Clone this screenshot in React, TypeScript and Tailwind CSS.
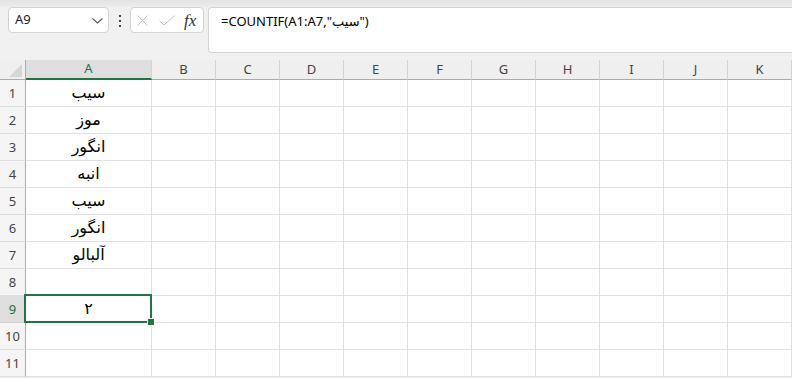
import React from "react";

const cols = ["B", "C", "D", "E", "F", "G", "H", "I", "J", "K"];
const data: Record<number, string> = {
  1: "سیب",
  2: "موز",
  3: "انگور",
  4: "انبه",
  5: "سیب",
  6: "انگور",
  7: "آلبالو",
  9: "۲",
};

const ui = { fontFamily: '"Noto Sans", "Open Sans", sans-serif' };
const fa = { fontFamily: '"DejaVu Sans", "Noto Sans", sans-serif' };

export default function App() {
  const rows = Array.from({ length: 11 }, (_, i) => i + 1);
  return (
    <div className="w-[792px] h-[378px] overflow-hidden bg-[#f0f0f0]" style={ui}>
      <div className="h-[7px] bg-gradient-to-b from-[#e3e3e3] to-[#ececec]" />
      <div className="flex h-[46px] pl-[8px]">
        <div className="flex h-[26px] w-[101px] items-center justify-between rounded-[4px] border border-[#d4d4d4] bg-white pl-[6px] pr-[5px]">
          <span className="text-[13px] text-[#222]">A9</span>
          <svg width="11" height="6" viewBox="0 0 11 6" className="mt-[1px]">
            <polyline points="0.5,0.5 5.5,5 10.5,0.5" fill="none" stroke="#555" strokeWidth="1.1" />
          </svg>
        </div>
        <div className="flex w-[21px] flex-col items-center gap-[3px] pt-[8px]">
          <div className="h-[2px] w-[2px] bg-[#444]" />
          <div className="h-[2px] w-[2px] bg-[#444]" />
          <div className="h-[2px] w-[2px] bg-[#444]" />
        </div>
        <div className="flex h-[26px] w-[74px] items-center rounded-[4px] border border-[#d4d4d4] bg-white pl-[6px]">
          <svg width="11" height="11" viewBox="0 0 11 11">
            <line x1="0.5" y1="0.5" x2="10.5" y2="10.5" stroke="#c4c4c4" strokeWidth="1" />
            <line x1="10.5" y1="0.5" x2="0.5" y2="10.5" stroke="#c4c4c4" strokeWidth="1" />
          </svg>
          <svg width="16" height="11" viewBox="0 0 16 11" className="ml-[11px]">
            <polyline points="0.5,5.5 5,10 15.5,0.5" fill="none" stroke="#c4c4c4" strokeWidth="1" />
          </svg>
          <span
            className="ml-[9px] text-[17px] italic leading-none text-[#333]"
            style={{ fontFamily: '"Liberation Serif", "DejaVu Serif", serif' }}
          >
            fx
          </span>
        </div>
        <div className="ml-[4px] flex h-[46px] flex-1 items-start rounded-l-[4px] border border-r-0 border-[#d4d4d4] bg-white pl-[12px] pt-[4px]">
          <span className="text-[13px] text-black" dir="ltr">
            =COUNTIF(A1:A7,"<span style={fa}>سیب</span>")
          </span>
        </div>
      </div>
      <div className="h-[7px]" />
      <div className="grid grid-cols-[26px_126px_repeat(10,64px)]">
        <div className="relative h-[20px] border-b border-r border-[#ababab] bg-[#efefef]">
          <svg width="13" height="13" viewBox="0 0 13 13" className="absolute right-[3px] bottom-[2px]">
            <polygon points="13,0 13,13 0,13" fill="#d6d6d6" />
          </svg>
        </div>
        <div className="flex h-[20px] items-center justify-center border-b-2 border-r border-b-[#217346] border-r-[#d4d4d4] bg-[#dedede] text-[13px] text-[#217346]">
          A
        </div>
        {cols.map((c) => (
          <div
            key={c}
            className="flex h-[20px] items-center justify-center border-b border-r border-b-[#ababab] border-r-[#d4d4d4] bg-[#efefef] text-[13px] text-[#444]"
          >
            {c}
          </div>
        ))}
        {rows.map((r) => {
          const sel = r === 9;
          return (
            <React.Fragment key={r}>
              <div
                className={`flex h-[27px] items-end justify-center border-b border-r pb-[3px] text-[13px] ${
                  sel
                    ? "border-b-[#d4d4d4] border-r-[#217346] bg-[#dedede] text-[#217346]"
                    : "border-b-[#dedede] border-r-[#ababab] bg-[#f5f5f5] text-[#444]"
                }`}
              >
                {r}
              </div>
              <div className="relative flex h-[27px] items-center justify-center border-b border-r border-[#e1e1e1] bg-white">
                {data[r] && (
                  <span dir="rtl" className="text-[16px] text-black" style={fa}>
                    {data[r]}
                  </span>
                )}
                {sel && (
                  <>
                    <div className="pointer-events-none absolute z-10 -top-[2px] -left-[2px] -right-[1px] -bottom-[1px] border-2 border-[#217346]" />
                    <div className="absolute z-20 -right-[4px] -bottom-[4px] h-[8px] w-[8px] border border-white bg-[#217346]" />
                  </>
                )}
              </div>
              {cols.map((c) => (
                <div key={c} className="h-[27px] border-b border-r border-[#e1e1e1] bg-white" />
              ))}
            </React.Fragment>
          );
        })}
      </div>
    </div>
  );
}
